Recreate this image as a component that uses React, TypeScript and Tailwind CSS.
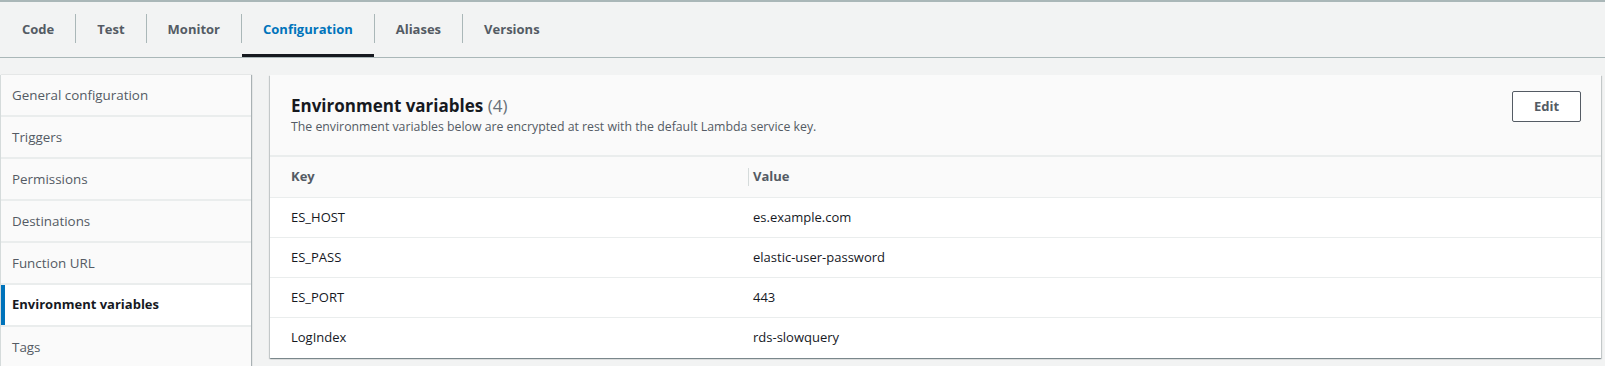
import React from 'react';

const tabs = ['Code', 'Test', 'Monitor', 'Configuration', 'Aliases', 'Versions'];
const activeTab = 'Configuration';

const navItems = [
  'General configuration',
  'Triggers',
  'Permissions',
  'Destinations',
  'Function URL',
  'Environment variables',
  'Tags',
];
const activeNav = 'Environment variables';

const envVars = [
  { key: 'ES_HOST', value: 'es.example.com' },
  { key: 'ES_PASS', value: 'elastic-user-password' },
  { key: 'ES_PORT', value: '443' },
  { key: 'LogIndex', value: 'rds-slowquery' },
];

const App: React.FC = () => {
  return (
    <div className="w-[1605px] h-[366px] overflow-hidden bg-[#f2f3f3] font-['Open_Sans',sans-serif] border-t-2 border-[#aab7b8]">
      {/* Tabs */}
      <div className="flex h-[56px] border-b border-[#aab7b8] pl-px">
        {tabs.map((tab, idx) => (
          <React.Fragment key={tab}>
            {idx > 0 && <div className="w-px h-[29px] bg-[#aab7b8] self-center mt-[-2px]" />}
            <div
              className={`flex items-center px-[21px] text-[13px] font-bold border-b-[3px] ${
                tab === activeTab ? 'text-[#0073bb] border-[#16191f]' : 'text-[#545b64] border-transparent'
              }`}
            >
              <span className="pt-[4px]">{tab}</span>
            </div>
          </React.Fragment>
        ))}
      </div>

      {/* Body */}
      <div className="flex items-start pt-[17px] gap-[19px]">
        {/* Side navigation */}
        <div className="w-[251px] shrink-0 border-l border-[#d5dbdb] shadow-[1px_0_1px_rgba(0,28,36,0.3)] flex flex-col gap-[2px] bg-[#eaeded]">
          {navItems.map((item) => (
            <div
              key={item}
              className={`h-[40px] flex items-center ${
                item === activeNav
                  ? 'bg-white text-[13px] font-bold text-[#16191f] border-l-4 border-[#0073bb] pl-[7px]'
                  : 'bg-[#fafafa] text-[13.4px] text-[#545b64] pl-[11px]'
              }`}
            >
              {item}
            </div>
          ))}
        </div>

        {/* Environment variables card */}
        <div className="flex-1 mr-[4px] bg-white shadow-[0_1px_1px_0_rgba(0,28,36,0.3),1px_1px_1px_0_rgba(0,28,36,0.15),-1px_1px_1px_0_rgba(0,28,36,0.15)]">
          <div className="h-[82px] bg-[#fafafa] border-b-2 border-[#eaeded] flex items-start justify-between pl-[21px] pr-[20px] pt-[19px]">
            <div>
              <h2 className="text-[17px] leading-[23px] font-bold text-[#16191f]">
                Environment variables <span className="font-normal text-[#687078]">(4)</span>
              </h2>
              <p className="text-[12.3px] leading-[16px] text-[#545b64] mt-[2px]">
                The environment variables below are encrypted at rest with the default Lambda service key.
              </p>
            </div>
            <button className="w-[69px] h-[31px] mt-[-3px] bg-white border border-[#545b64] rounded-[2px] text-[13px] font-bold text-[#545b64]">
              Edit
            </button>
          </div>

          {/* Table header */}
          <div className="grid grid-cols-[483px_1fr] h-[41px] bg-[#fafafa] border-b border-[#eaeded] text-[13px] font-bold text-[#545b64]">
            <div className="flex items-center justify-between pl-[21px]">
              <span>Key</span>
              <div className="w-px h-[18px] bg-[#d5dbdb] mr-[4px]" />
            </div>
            <div className="flex items-center">Value</div>
          </div>

          {/* Rows */}
          {envVars.map((row, idx) => (
            <div
              key={row.key}
              className={`grid grid-cols-[483px_1fr] h-[40px] text-[13px] text-[#16191f] ${
                idx < envVars.length - 1 ? 'border-b border-[#eaeded]' : ''
              }`}
            >
              <div className="flex items-center pl-[21px]">{row.key}</div>
              <div className="flex items-center">{row.value}</div>
            </div>
          ))}
        </div>
      </div>
    </div>
  );
};

export default App;
